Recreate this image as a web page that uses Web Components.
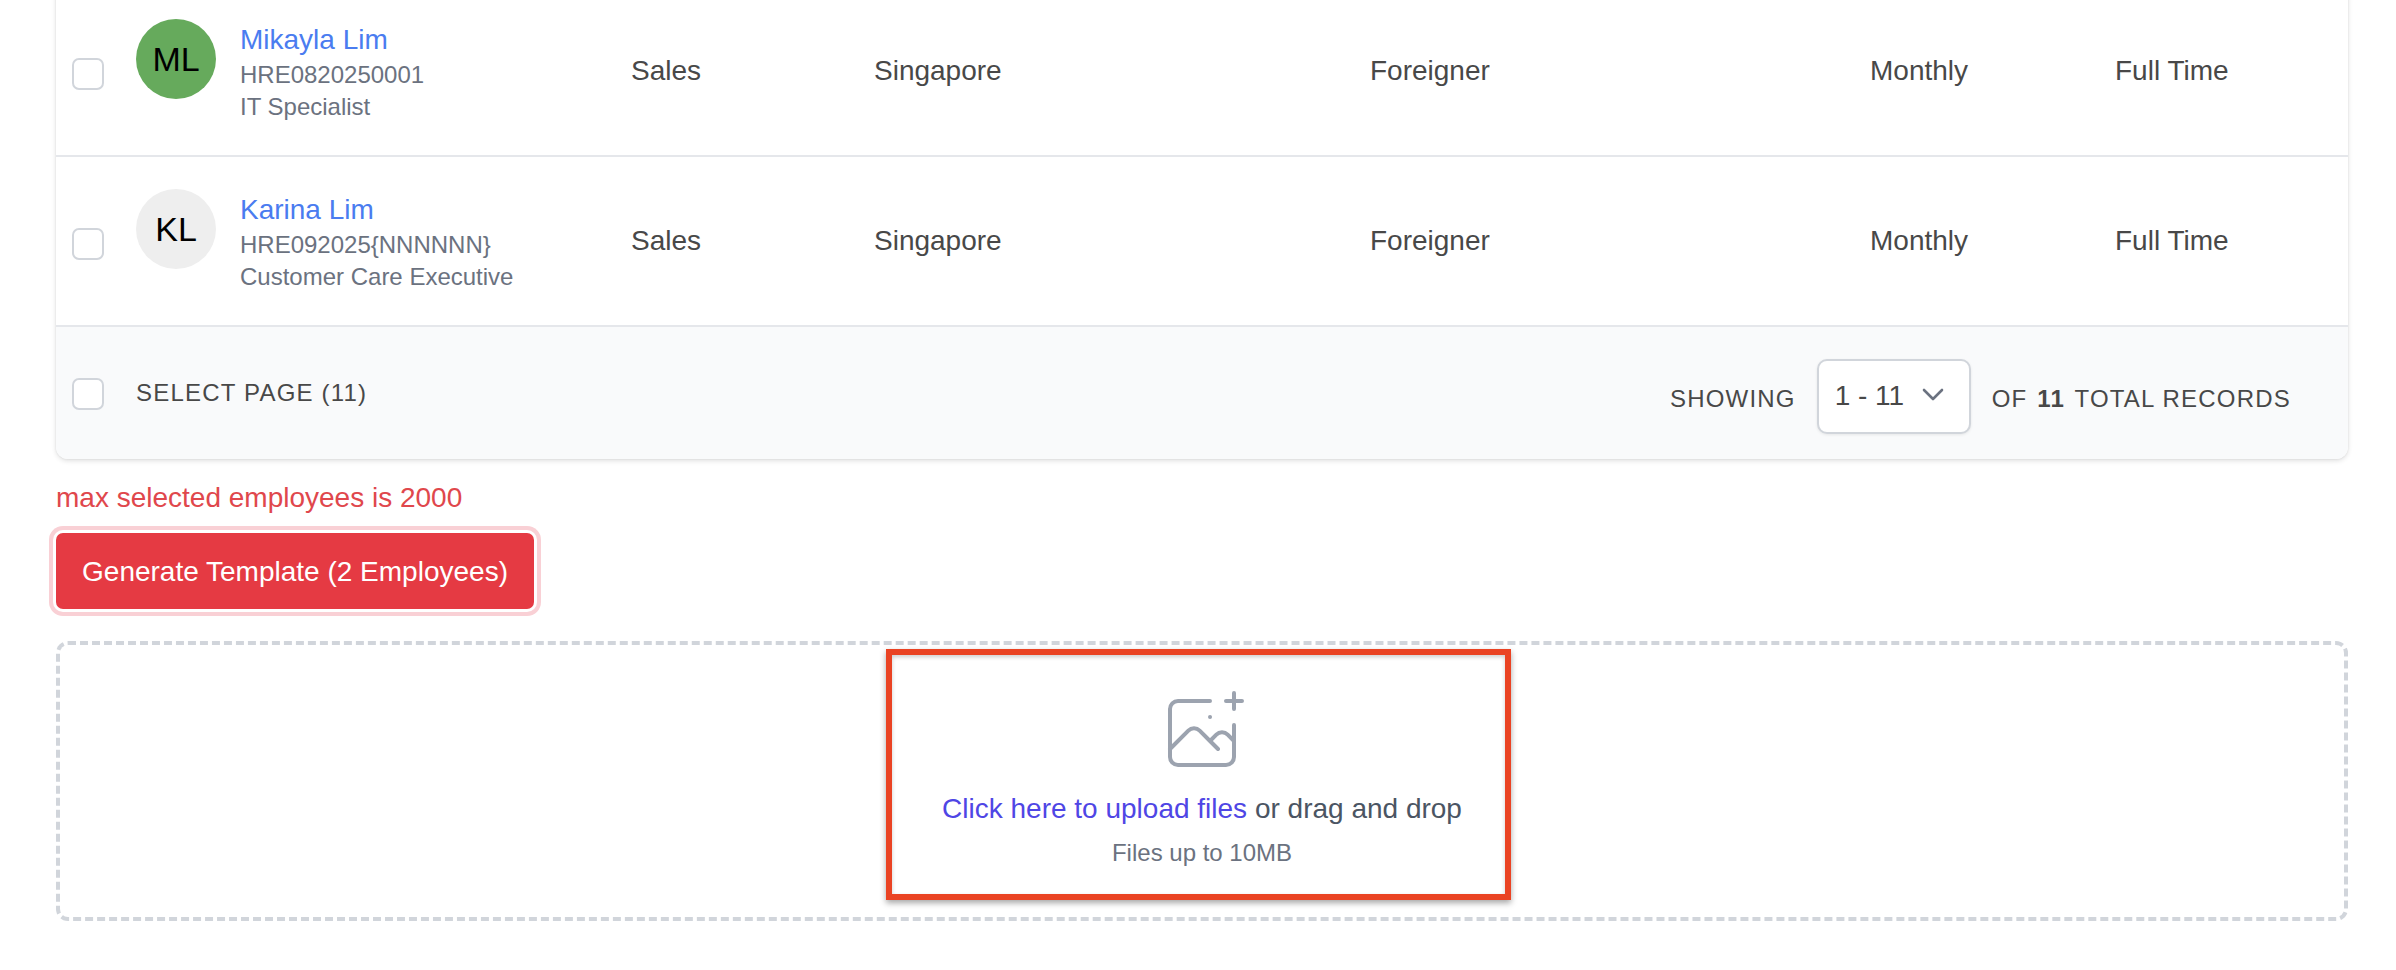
<!DOCTYPE html>
<html lang="en">
<head>
<meta charset="utf-8">
<title>Employees</title>
<style>
    html, body { margin: 0; padding: 0; background: #fff; overflow: hidden; }
    body { font-family: "Liberation Sans", Arial, sans-serif; color: #444; }
    main-page { display: block; }
</style>
</head>
<body>
<main-page>
    <employee-card>
        <employee-row name="Mikayla Lim" code="HRE0820250001" role="IT Specialist" initials="ML" avatar="#66aa5c"></employee-row>
        <employee-row name="Karina Lim" code="HRE092025{NNNNNN}" role="Customer Care Executive" initials="KL" avatar="#eeeeee"></employee-row>
        <table-footer slot="footer" count="11" total="11" range="1 - 11"></table-footer>
    </employee-card>
    <generate-panel message="max selected employees is 2000" label="Generate Template (2 Employees)"></generate-panel>
    <upload-zone></upload-zone>
</main-page>

<script>
class MainPage extends HTMLElement {
    constructor() {
        super();
        this.attachShadow({ mode: 'open' });
        this.shadowRoot.innerHTML = `
            <style>
                :host {
                    display: block;
                    padding: 0 48px 0 56px;
                    font-family: "Liberation Sans", Arial, sans-serif;
                }
            </style>
            <slot></slot>
        `;
    }
}

class CheckBox extends HTMLElement {
    constructor() {
        super();
        this.attachShadow({ mode: 'open' });
        this.shadowRoot.innerHTML = `
            <style>
                :host {
                    display: block;
                    box-sizing: border-box;
                    width: 32px;
                    height: 32px;
                    background: #fff;
                    border: 2px solid #d1d5db;
                    border-radius: 7px;
                }
            </style>
        `;
    }
}

class EmployeeCard extends HTMLElement {
    constructor() {
        super();
        this.attachShadow({ mode: 'open' });
        this.shadowRoot.innerHTML = `
            <style>
                :host {
                    display: block;
                    margin-top: -13px;
                    background: #fff;
                    border-radius: 0 0 12px 12px;
                    box-shadow: 0 2px 5px rgba(0, 0, 0, .12), 0 0 2px rgba(0, 0, 0, .1);
                }
            </style>
            <slot></slot>
            <slot name="footer"></slot>
        `;
    }
}

class EmployeeRow extends HTMLElement {
    constructor() {
        super();
        this.attachShadow({ mode: 'open' });
    }

    connectedCallback() {
        const name = this.getAttribute('name');
        const code = this.getAttribute('code');
        const role = this.getAttribute('role');
        const initials = this.getAttribute('initials');
        const avatar = this.getAttribute('avatar');
        this.shadowRoot.innerHTML = `
            <style>
                :host {
                    display: grid;
                    box-sizing: border-box;
                    height: 170px;
                    grid-template-columns: 80px 495px 243px 496px 500px 245px 1fr;
                    align-items: center;
                    border-bottom: 2px solid #e5e7eb;
                    font-size: 28px;
                    color: #484848;
                }
                .check { padding-left: 16px; margin-top: 6px; }
                .person {
                    display: flex;
                    align-self: start;
                    padding-top: 32px;
                    gap: 24px;
                }
                .avatar {
                    display: flex;
                    align-items: center;
                    justify-content: center;
                    flex: none;
                    width: 80px;
                    height: 80px;
                    border-radius: 50%;
                    font-size: 34px;
                    color: #000;
                    background: ${avatar};
                }
                .name { font-size: 28px; line-height: 42px; margin-bottom: -2px; color: #4a7cf0; }
                .sub { font-size: 24px; line-height: 32px; color: #6b7280; }
            </style>
            <div class="check"><check-box></check-box></div>
            <div class="person">
                <div class="avatar">${initials}</div>
                <div>
                    <div class="name">${name}</div>
                    <div class="sub">${code}</div>
                    <div class="sub">${role}</div>
                </div>
            </div>
            <div>Sales</div>
            <div>Singapore</div>
            <div>Foreigner</div>
            <div>Monthly</div>
            <div>Full Time</div>
        `;
    }
}

class PageSelect extends HTMLElement {
    constructor() {
        super();
        this.attachShadow({ mode: 'open' });
        this.shadowRoot.innerHTML = `
            <style>
                :host {
                    display: flex;
                    box-sizing: border-box;
                    align-items: center;
                    justify-content: space-between;
                    width: 154px;
                    height: 75px;
                    padding: 0 25px 0 16px;
                    background: #fff;
                    border: 2px solid #d1d5db;
                    border-radius: 10px;
                    box-shadow: 0 1px 3px rgba(0, 0, 0, .08);
                    font-size: 28px;
                    letter-spacing: 0;
                    color: #484848;
                }
                svg { display: block; margin-top: -4px; }
            </style>
            <slot></slot>
            <svg width="22" height="13" viewBox="0 0 22 13" fill="none" stroke="#6b7280" stroke-width="2.6" stroke-linecap="round" stroke-linejoin="round">
                <path d="M2 2l9 9 9-9"/>
            </svg>
        `;
    }
}

class TableFooter extends HTMLElement {
    constructor() {
        super();
        this.attachShadow({ mode: 'open' });
    }

    connectedCallback() {
        this.shadowRoot.innerHTML = `
            <style>
                :host {
                    display: flex;
                    box-sizing: border-box;
                    height: 132px;
                    align-items: center;
                    justify-content: space-between;
                    padding: 0 57px 0 16px;
                    background: #f9fafb;
                    border-radius: 0 0 12px 12px;
                    font-size: 24px;
                    letter-spacing: 1.2px;
                    color: #484848;
                }
                .left { display: flex; align-items: center; gap: 32px; }
                .left check-box { margin-top: 1px; }
                .right { display: flex; align-items: center; gap: 21px; margin-top: 6px; }
                .right span { margin-top: 5px; }
                b { font-weight: 700; margin: 0 2px; }
            </style>
            <div class="left">
                <check-box></check-box>
                <span>SELECT PAGE (${this.getAttribute('count')})</span>
            </div>
            <div class="right">
                <span>SHOWING</span>
                <page-select>${this.getAttribute('range')}</page-select>
                <span>OF <b>${this.getAttribute('total')}</b> TOTAL RECORDS</span>
            </div>
        `;
    }
}

class GeneratePanel extends HTMLElement {
    constructor() {
        super();
        this.attachShadow({ mode: 'open' });
    }

    connectedCallback() {
        this.shadowRoot.innerHTML = `
            <style>
                :host { display: block; }
                .error {
                    margin-top: 19px;
                    font-size: 28px;
                    line-height: 40px;
                    color: #e0474c;
                }
                button {
                    display: block;
                    box-sizing: border-box;
                    width: 478px;
                    height: 76px;
                    margin-top: 15px;
                    padding: 2px 0 0;
                    border: 0;
                    border-radius: 7px;
                    background: #e53a43;
                    color: #fff;
                    font: 28px "Liberation Sans", Arial, sans-serif;
                    box-shadow: 0 0 0 3px #fff, 0 0 0 7px #f9d0d5;
                }
            </style>
            <div class="error">${this.getAttribute('message')}</div>
            <button type="button">${this.getAttribute('label')}</button>
        `;
    }
}

class UploadZone extends HTMLElement {
    constructor() {
        super();
        this.attachShadow({ mode: 'open' });
        this.shadowRoot.innerHTML = `
            <style>
                :host {
                    display: flex;
                    position: relative;
                    box-sizing: border-box;
                    flex-direction: column;
                    align-items: center;
                    height: 280px;
                    margin-top: 32px;
                    padding-top: 40px;
                    border: 4px dashed #d1d5db;
                    border-radius: 12px;
                }
                svg { display: block; width: 96px; height: 96px; }
                .main {
                    margin-top: 8px;
                    font-size: 28px;
                    line-height: 40px;
                    color: #4b5563;
                }
                .main a { color: #4f46e5; text-decoration: none; }
                .small {
                    margin-top: 8px;
                    font-size: 24px;
                    line-height: 32px;
                    color: #6b7280;
                }
                /* annotation drawn over the drop zone */
                .mark {
                    position: absolute;
                    left: 826px;
                    top: 4px;
                    box-sizing: border-box;
                    width: 625px;
                    height: 251px;
                    border: 6px solid #ea4323;
                    box-shadow: 0 3px 6px rgba(0, 0, 0, .35), inset 0 2px 4px rgba(0, 0, 0, .2);
                }
            </style>
            <svg viewBox="0 0 48 48" fill="none" stroke="#9ca3af" stroke-width="2" stroke-linecap="round" stroke-linejoin="round">
                <path d="M28 8H12a4 4 0 00-4 4v20m32-12v8m0 0v8a4 4 0 01-4 4H12a4 4 0 01-4-4v-4m32-4l-3.172-3.172a4 4 0 00-5.656 0L28 28M8 32l9.172-9.172a4 4 0 015.656 0L28 28m0 0l4 4m4-24h8m-4-4v8m-12 4h.02"/>
            </svg>
            <div class="main"><a href="#">Click here to upload files</a> or drag and drop</div>
            <div class="small">Files up to 10MB</div>
            <div class="mark"></div>
        `;
    }
}

customElements.define('main-page', MainPage);
customElements.define('check-box', CheckBox);
customElements.define('employee-card', EmployeeCard);
customElements.define('employee-row', EmployeeRow);
customElements.define('page-select', PageSelect);
customElements.define('table-footer', TableFooter);
customElements.define('generate-panel', GeneratePanel);
customElements.define('upload-zone', UploadZone);
</script>
</body>
</html>
